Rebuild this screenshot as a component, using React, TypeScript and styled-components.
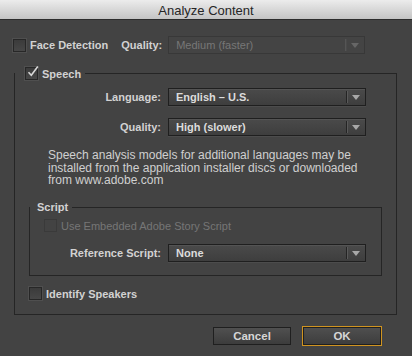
import React from 'react'
import styled, { createGlobalStyle } from 'styled-components'

const Global = createGlobalStyle`
  html, body {
    margin: 0;
    padding: 0;
    background: #434343;
  }
  * {
    box-sizing: border-box;
  }
`

const Dialog = styled.div`
  width: 412px;
  height: 356px;
  background: #434343;
  font-family: 'Liberation Sans', Arial, sans-serif;
  font-size: 11px;
  color: #d2d2d2;
  display: flex;
  flex-direction: column;
  overflow: hidden;
`

const TitleBar = styled.div`
  height: 20px;
  flex-shrink: 0;
  background: linear-gradient(#ececec, #c4c4c4);
  border-bottom: 1px solid #2c2c2c;
  color: #262626;
  font-size: 13px;
  display: flex;
  align-items: center;
  justify-content: center;
  padding-top: 1px;
`

const Body = styled.div`
  display: flex;
  flex-direction: column;
  padding: 16px 15px 0 14px;
`

const Row = styled.div<{ $indent?: number; $top?: number }>`
  display: flex;
  align-items: center;
  height: 18px;
  margin-left: ${p => p.$indent ?? 0}px;
  margin-top: ${p => p.$top ?? 0}px;
`

const Box = styled.span<{ $disabled?: boolean }>`
  width: 13px;
  height: 13px;
  flex-shrink: 0;
  border: 1px solid ${p => (p.$disabled ? '#3a3a3a' : '#272727')};
  background: ${p => (p.$disabled ? '#434343' : 'linear-gradient(#3b3b3b, #474747)')};
  box-shadow: ${p => (p.$disabled ? 'none' : '0 0 0 1px rgba(110,110,110,0.3)')};
  position: relative;
  display: inline-flex;
`

const Label = styled.span<{ $disabled?: boolean; $regular?: boolean }>`
  font-weight: ${p => (p.$regular ? 'normal' : 'bold')};
  color: ${p => (p.$disabled ? '#767676' : '#d2d2d2')};
  white-space: nowrap;
`

const CheckLabel = styled.label`
  display: inline-flex;
  align-items: center;
  gap: 4px;
`

const FieldLabel = styled.span<{ $width: number }>`
  width: ${p => p.$width}px;
  text-align: right;
  font-weight: bold;
  padding-right: 7px;
  white-space: nowrap;
  flex-shrink: 0;
`

const Select = styled.div<{ $width: number; $disabled?: boolean }>`
  width: ${p => p.$width}px;
  height: 18px;
  border: 1px solid ${p => (p.$disabled ? '#383838' : '#1f1f1f')};
  background: ${p => (p.$disabled ? '#444' : 'linear-gradient(#4a4a4a, #3e3e3e)')};
  box-shadow: ${p =>
    p.$disabled ? 'none' : 'inset 0 1px 0 rgba(255,255,255,0.06), 0 1px 0 rgba(255,255,255,0.05)'};
  display: flex;
  align-items: center;
  color: ${p => (p.$disabled ? '#777' : '#dcdcdc')};
  font-weight: ${p => (p.$disabled ? 'normal' : 'bold')};
  flex-shrink: 0;
`

const SelectText = styled.span`
  flex: 1;
  padding-left: 7px;
  white-space: nowrap;
`

const Divider = styled.span<{ $disabled?: boolean }>`
  width: 1px;
  height: 12px;
  background: ${p => (p.$disabled ? '#555' : '#242424')};
  box-shadow: 1px 0 0 ${p => (p.$disabled ? '#4a4a4a' : '#5a5a5a')};
`

const Arrow = styled.span<{ $disabled?: boolean }>`
  width: 18px;
  display: flex;
  justify-content: center;
  &::after {
    content: '';
    border-left: 4px solid transparent;
    border-right: 4px solid transparent;
    border-top: 5px solid ${p => (p.$disabled ? '#666' : '#a8a8a8')};
    margin-top: 1px;
  }
`

const Group = styled.fieldset<{ $top: number; $width?: number }>`
  margin: ${p => p.$top}px 0 0 0;
  border: 1px solid #252525;
  padding: 0;
  min-width: 0;
  width: ${p => (p.$width ? `${p.$width}px` : 'auto')};
`

const Legend = styled.legend<{ $pad: number }>`
  padding: 0 4px 0 ${p => p.$pad}px;
  margin-left: 0;
  display: flex;
  align-items: center;
  gap: 4px;
  height: 13px;
  font-weight: bold;
  color: #d2d2d2;
`

const GroupBody = styled.div<{ $bottom: number }>`
  display: flex;
  flex-direction: column;
  padding: 0 0 ${p => p.$bottom}px 14px;
`

const Note = styled.p`
  margin: 13px 0 0 19px;
  font-size: 12px;
  line-height: 12.5px;
  color: #d0d0d0;
  white-space: nowrap;
`

const Footer = styled.div`
  display: flex;
  justify-content: flex-end;
  gap: 11px;
  padding: 12px 15px 0 0;
`

const Button = styled.button<{ $default?: boolean; $width: number }>`
  width: ${p => p.$width}px;
  height: ${p => (p.$default ? 20 : 18)}px;
  margin-top: ${p => (p.$default ? -1 : 0)}px;
  font-family: inherit;
  font-size: 11.5px;
  font-weight: bold;
  color: #d6d6d6;
  background: linear-gradient(#505050, #3c3c3c);
  border: 1px solid ${p => (p.$default ? '#d09420' : '#1f1f1f')};
  box-shadow: ${p => (p.$default ? 'inset 0 0 0 1px #1f1f1f' : 'none')};
  padding: 0;
`

const CheckMark = styled.svg`
  position: absolute;
  left: 0;
  top: -3px;
`

const Check = () => (
  <CheckMark width="13" height="13" viewBox="0 0 13 13">
    <path d="M2.5 7.2 L5.3 10.2 L11.8 1.5" fill="none" stroke="#d8d8d8" strokeWidth="1.6" />
  </CheckMark>
)

const Dropdown: React.FC<{ value: string; width?: number; disabled?: boolean }> = ({
  value,
  width = 198,
  disabled,
}) => (
  <Select $width={width} $disabled={disabled}>
    <SelectText>{value}</SelectText>
    <Divider $disabled={disabled} />
    <Arrow $disabled={disabled} />
  </Select>
)

const App: React.FC = () => {
  return (
    <Dialog>
      <Global />
      <TitleBar>Analyze Content</TitleBar>
      <Body>
        <Row $indent={-1}>
          <CheckLabel>
            <Box />
            <Label>Face Detection</Label>
          </CheckLabel>
          <Label style={{ marginLeft: 13, marginRight: 6 }}>Quality:</Label>
          <Dropdown value="Medium (faster)" width={197} disabled />
        </Row>

        <Group $top={13}>
          <Legend $pad={10}>
            <Box>
              <Check />
            </Box>
            <span>Speech</span>
          </Legend>
          <GroupBody $bottom={11}>
            <Row $top={8}>
              <FieldLabel $width={139}>Language:</FieldLabel>
              <Dropdown value="English – U.S." />
            </Row>
            <Row $top={12}>
              <FieldLabel $width={139}>Quality:</FieldLabel>
              <Dropdown value="High (slower)" />
            </Row>
            <Note>
              Speech analysis models for additional languages may be
              <br />
              installed from the application installer discs or downloaded
              <br />
              from www.adobe.com
            </Note>

            <Group $top={14} $width={353}>
              <Legend $pad={7}>
                <span>Script</span>
              </Legend>
              <GroupBody $bottom={13}>
                <Row $top={3}>
                  <CheckLabel>
                    <Box $disabled />
                    <Label $disabled $regular>
                      Use Embedded Adobe Story Script
                    </Label>
                  </CheckLabel>
                </Row>
                <Row $top={9}>
                  <FieldLabel $width={124}>Reference Script:</FieldLabel>
                  <Dropdown value="None" />
                </Row>
              </GroupBody>
            </Group>

            <Row $top={9}>
              <CheckLabel>
                <Box />
                <Label>Identify Speakers</Label>
              </CheckLabel>
            </Row>
          </GroupBody>
        </Group>

        <Footer>
          <Button $width={78}>Cancel</Button>
          <Button $width={80} $default>
            OK
          </Button>
        </Footer>
      </Body>
    </Dialog>
  )
}

export default App
